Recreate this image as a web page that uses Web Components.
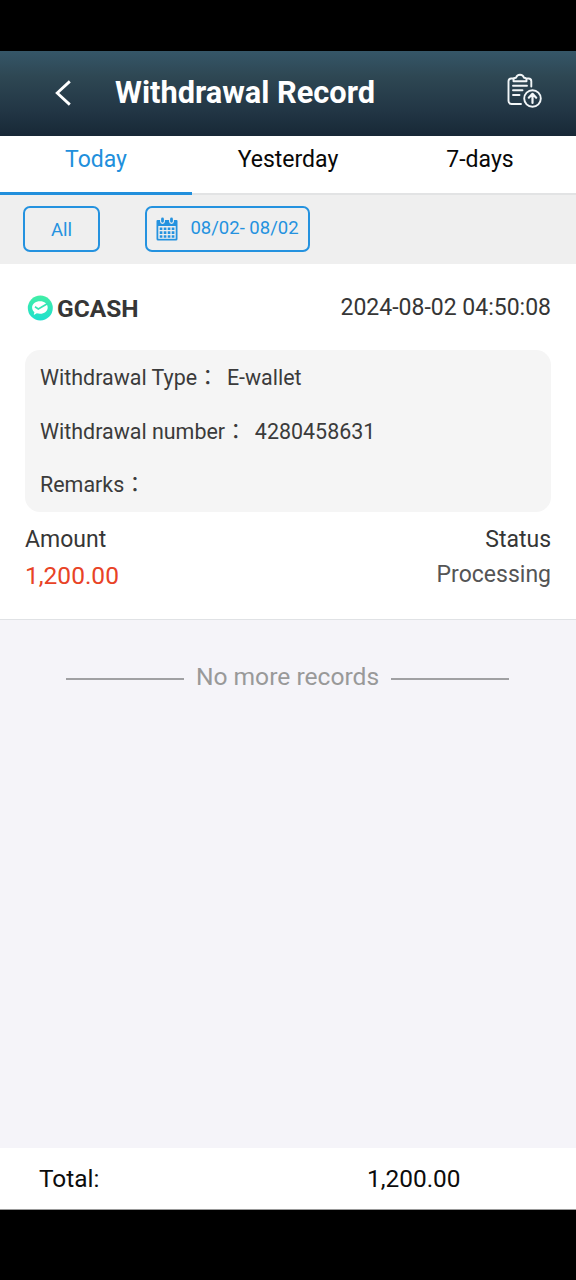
<!DOCTYPE html>
<html lang="en">
<head>
<meta charset="utf-8">
<title>Withdrawal Record</title>
<style>
html,body{margin:0;height:100%;background:#000}
body{font-family:Roboto,"Noto Sans CJK TC",sans-serif}
</style>
</head>
<body>
<withdrawal-app></withdrawal-app>
<script>
function define(name, html) {
  const t = document.createElement('template');
  t.innerHTML = html;
  customElements.define(name, class extends HTMLElement {
    constructor() {
      super();
      this.attachShadow({ mode: 'open' }).appendChild(t.content.cloneNode(true));
    }
  });
}

define('app-header', `
<style>
:host{display:flex;align-items:center;height:85px;box-sizing:border-box;padding:0 34px 0 54px;color:#fff;background:linear-gradient(#355668,#2e4753 30%,#223645 70%,#172836)}
.back{width:18px;height:28px;flex:none;margin-bottom:2px}
h1{margin:0 0 2px 43px;flex:1;font-size:30.750px;line-height:40px;font-weight:700;white-space:nowrap}
.rec{width:36px;height:36px;flex:none;margin-bottom:5px}
svg{display:block}
</style>
<svg class="back" viewBox="0 0 18 28" fill="none" stroke="#fff" stroke-width="2.8"><path d="M15.8 2.4 3.2 14l12.6 11.6"/></svg>
<h1><slot></slot></h1>
<svg class="rec" viewBox="0 0 36 36" fill="none" stroke="#f2f6f8" stroke-width="1.9" stroke-linecap="round" stroke-linejoin="round">
<path d="M7.500 5.500H5.300Q2.500 5.500 2.500 8.300V28q0 3 3 3H15M21.500 5.500H22.500Q25.300 5.500 25.300 8.300V13.500"/>
<path d="M7.500 8.300V6.500Q7.500 5 10 4.800 11 1.800 14 1.800t4 3q2.500.2 2.500 1.700v1.800Z"/>
<path d="M7 12.700h14M7 17.200h9.500M7 22h6.500"/>
<circle cx="26.500" cy="25.500" r="8.300"/>
<path d="M26.500 30v-8.500M22.800 24.700l3.700-3.900 3.700 3.900" stroke-width="2.200"/>
</svg>`);

define('tab-item', `
<style>
:host{flex:1;box-sizing:border-box;height:59px;text-align:center;color:#080808;font-size:23px;line-height:48px;border-bottom:2px solid #e2e3e4}
:host([active]){color:#218fdc;border-bottom:3px solid #218fdc}
</style><slot></slot>`);

define('tab-bar', `
<style>:host{display:flex;background:#fff;height:59px}</style><slot></slot>`);

define('filter-button', `
<style>
:host{display:flex;align-items:center;justify-content:center;box-sizing:border-box;height:46px;border:2px solid #2492df;border-radius:7px;color:#2492df;font-size:18.500px;line-height:24px;white-space:nowrap}
</style><slot name="icon"></slot><slot></slot>`);

define('calendar-icon', `
<style>:host{display:block;width:22px;height:24px}svg{display:block}</style>
<svg width="22" height="24" viewBox="0 0 22 24">
<path fill="#2492df" d="M1.500 3H20.500Q21.500 3 21.500 4V22Q21.500 23.500 20 23.500H2Q.5 23.500 .5 22V4Q.5 3 1.500 3Z"/>
<path fill="#efefef" d="M2.300 9H19.700V21.800H2.300Z"/>
<path fill="#efefef" d="M4.100 1h4.800v3.500a2.400 2.400 0 0 1-4.800 0ZM13.100 1h4.800v3.500a2.400 2.400 0 0 1-4.800 0Z"/>
<path stroke="#2492df" stroke-width="2.800" stroke-linecap="round" d="M6.500 2v2.300M15.500 2v2.300"/>
<path stroke="#2492df" stroke-width="2.600" stroke-dasharray="2.700 1.300" d="M3.700 11.700H18.600M3.700 15.600H18.600M3.700 19.500H18.600"/>
</svg>`);

define('filter-bar', `
<style>
:host{display:flex;align-items:flex-start;box-sizing:border-box;height:69px;padding:11px 23px;gap:45px;background:#efefef}
.all{width:77px}
.all span{margin-top:2px}
.date{width:165px}
.date span{margin:0 0 2px 12px}
</style>
<filter-button class="all"><span>All</span></filter-button>
<filter-button class="date"><calendar-icon slot="icon"></calendar-icon><span>08/02- 08/02</span></filter-button>`);

define('gcash-logo', `
<style>:host{display:block;width:26px;height:26px}svg{display:block}</style>
<svg width="26" height="26" viewBox="0 0 26 26">
<defs><linearGradient id="g" x1="0" y1="0" x2="0" y2="1"><stop offset="0" stop-color="#42eea5"/><stop offset="1" stop-color="#1fdfcf"/></linearGradient></defs>
<circle cx="13.300" cy="13" r="12.500" fill="url(#g)"/>
<path fill="#fff" d="M13 6.300c4.500 0 7.700 2.700 7.700 6.200s-3.200 6.300-7.700 6.300c-1.200 0-2.200-.2-3.200-.5L6.800 20l.6-2.900c-1.500-1.200-2.300-2.800-2.300-4.600 0-3.500 3.400-6.200 7.900-6.200Z"/>
<path fill="none" stroke="#36e5b3" stroke-width="1.700" d="M8 11.800l3.300 2.200L22 7.700"/>
</svg>`);

define('detail-row', `
<style>:host{display:block;font-size:21.450px;line-height:53.500px;white-space:nowrap;color:#3b3b3b}
::slotted(span){margin-left:3px}</style><slot></slot>`);

define('record-card', `
<style>
:host{display:block;box-sizing:border-box;height:356px;background:#fff;border-bottom:1px solid #e0e2e5;padding:0 25px;color:#363636}
.top{display:flex;align-items:center;height:86px;font-size:23px}
.top b{font-size:24.500px;margin:2px auto 0 4px;font-weight:700}
gcash-logo{margin:2px 0 0 2px}
.details{background:#f5f5f5;border-radius:15px;height:162px;box-sizing:border-box;padding:1px 15px 0}
.pair{display:flex;justify-content:space-between;font-size:23px;line-height:36px}
.labels{margin-top:10px}
.values{color:#555;line-height:34px}
.amount{color:#e84326;font-size:24.500px;line-height:36px}
</style>
<div class="top"><gcash-logo></gcash-logo><b>GCASH</b><span>2024-08-02 04:50:08</span></div>
<div class="details">
<detail-row>Withdrawal Type： <span>E-wallet</span></detail-row>
<detail-row>Withdrawal number： <span>4280458631</span></detail-row>
<detail-row>Remarks：</detail-row>
</div>
<div class="pair labels"><span>Amount</span><span>Status</span></div>
<div class="pair values"><span class="amount">1,200.00</span><span>Processing</span></div>`);

define('end-note', `
<style>
:host{display:flex;align-items:center;justify-content:center;gap:12px;padding:38px 1px 0 0;color:#999;font-size:24.600px;line-height:40px;white-space:nowrap}
i{width:118px;height:2px;background:#a0a0a3;margin-top:3px}
span{margin-top:-1px}
</style><i></i><span><slot></slot></span><i></i>`);

define('total-bar', `
<style>
:host{display:flex;box-sizing:border-box;height:62px;padding:0 39px;background:#fff;border-bottom:1px solid #999;color:#0c0c0c;font-size:24.400px;line-height:62px}
span{width:328px}
</style><span>Total:</span><div><slot></slot></div>`);

define('withdrawal-app', `
<style>
:host{display:flex;flex-direction:column;box-sizing:border-box;height:1280px;width:576px;padding:51px 0 70px;background:#000}
main{flex:1;background:#f5f4f9}
</style>
<app-header>Withdrawal Record</app-header>
<tab-bar><tab-item active>Today</tab-item><tab-item>Yesterday</tab-item><tab-item>7-days</tab-item></tab-bar>
<filter-bar></filter-bar>
<main><record-card></record-card><end-note>No more records</end-note></main>
<total-bar>1,200.00</total-bar>`);
</script>
</body>
</html>
